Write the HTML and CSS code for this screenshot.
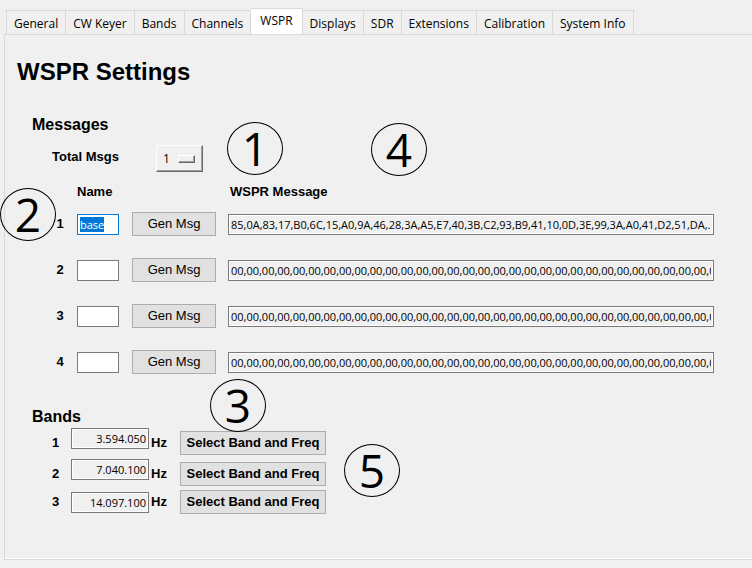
FILE: index.html
```html
<!DOCTYPE html>
<html lang="en">
<head>
<meta charset="utf-8">
<title>WSPR Settings</title>
<link rel="stylesheet" href="styles.css">
</head>
<body>
<nav class="tabs" role="tablist">
  <button class="tab" role="tab">General</button>
  <button class="tab" role="tab">CW Keyer</button>
  <button class="tab" role="tab">Bands</button>
  <button class="tab" role="tab">Channels</button>
  <button class="tab tab-active" role="tab" aria-selected="true">WSPR</button>
  <button class="tab" role="tab">Displays</button>
  <button class="tab" role="tab">SDR</button>
  <button class="tab" role="tab">Extensions</button>
  <button class="tab" role="tab">Calibration</button>
  <button class="tab" role="tab">System Info</button>
</nav>
<main class="panel">
  <h1>WSPR Settings</h1>
  <section class="messages">
    <h2>Messages</h2>
    <div class="total">
      <label for="total">Total Msgs</label>
      <span class="option"><select id="total"><option>1</option><option>2</option><option>3</option><option>4</option></select></span>
    </div>
    <div class="message-row heads">
      <span></span><span id="name-head">Name</span><span></span><span id="message-head">WSPR Message</span>
    </div>
    <div class="message-row">
      <label for="name1">1</label>
      <input class="field name" id="name1" value="base">
      <button class="button">Gen Msg</button>
      <input class="field" aria-labelledby="message-head" readonly value="85,0A,83,17,B0,6C,15,A0,9A,46,28,3A,A5,E7,40,3B,C2,93,B9,41,10,0D,3E,99,3A,A0,41,D2,51,DA,.">
    </div>
    <div class="message-row">
      <label for="name2">2</label>
      <input class="field name" id="name2">
      <button class="button">Gen Msg</button>
      <input class="field" aria-labelledby="message-head" readonly value="00,00,00,00,00,00,00,00,00,00,00,00,00,00,00,00,00,00,00,00,00,00,00,00,00,00,00,00,00,00,00,00,">
    </div>
    <div class="message-row">
      <label for="name3">3</label>
      <input class="field name" id="name3">
      <button class="button">Gen Msg</button>
      <input class="field" aria-labelledby="message-head" readonly value="00,00,00,00,00,00,00,00,00,00,00,00,00,00,00,00,00,00,00,00,00,00,00,00,00,00,00,00,00,00,00,00,">
    </div>
    <div class="message-row">
      <label for="name4">4</label>
      <input class="field name" id="name4">
      <button class="button">Gen Msg</button>
      <input class="field" aria-labelledby="message-head" readonly value="00,00,00,00,00,00,00,00,00,00,00,00,00,00,00,00,00,00,00,00,00,00,00,00,00,00,00,00,00,00,00,00,">
    </div>
  </section>
  <section class="bands">
    <h2>Bands</h2>
    <div class="band-row tall">
      <label for="band1">1</label>
      <input class="field freq" id="band1" readonly value="3.594.050">
      <span>Hz</span>
      <button class="button strong">Select Band and Freq</button>
    </div>
    <div class="band-row tall">
      <label for="band2">2</label>
      <input class="field freq" id="band2" readonly value="7.040.100">
      <span>Hz</span>
      <button class="button strong">Select Band and Freq</button>
    </div>
    <div class="band-row">
      <label for="band3">3</label>
      <input class="field freq" id="band3" readonly value="14.097.100">
      <span>Hz</span>
      <button class="button strong">Select Band and Freq</button>
    </div>
  </section>
</main>
<span class="callout callout-1">1</span>
<span class="callout callout-2">2</span>
<span class="callout callout-3">3</span>
<span class="callout callout-4">4</span>
<span class="callout callout-5">5</span>
<script src="script.js"></script>
</body>
</html>
```
FILE: styles.css
```css
* { box-sizing: border-box; }

body {
  margin: 0;
  min-height: 100vh;
  padding: 8px 0 8px 4px;
  display: flex;
  flex-direction: column;
  position: relative;
  overflow-x: hidden;
  background: #f0f0f0;
  color: #000;
  font: bold 13px/16px "Liberation Sans", Arial, sans-serif;
}

h1, h2 { margin: 0; }
h1 { font-size: 24px; line-height: 28px; padding: 23px 0 0 12px; }
h2 { font-size: 16px; line-height: 20px; padding-left: 27px; }

.tabs {
  display: flex;
  align-items: flex-end;
  padding-left: 2px;
}

.tab {
  height: 24px;
  margin: 0;
  padding: 2px 7px 0;
  border: 1px solid #d9d9d9;
  border-width: 1px 1px 0 0;
  background: #f0f0f0;
  color: #000;
  font: 12px/16px "Open Sans", "Noto Sans", sans-serif;
  white-space: nowrap;
}
.tab:first-child { border-left-width: 1px; }

.tab-active {
  height: 27px;
  margin-bottom: -1px;
  padding: 0 9px 2px;
  background: #fff;
}

.panel {
  flex: 1;
  border: 1px solid #d9d9d9;
  border-right: 0;
  box-shadow: inset 0 -1px #fff;
}

.messages { padding-top: 29px; }

.total {
  display: flex;
  align-items: center;
  padding: 10px 0 0 47px;
}
.total label { width: 104px; padding-bottom: 4px; }

.option { position: relative; }
.option::after {
  content: "";
  position: absolute;
  right: 8px;
  top: 10px;
  width: 15px;
  height: 6px;
  border: 1px solid;
  border-color: #fff #696969 #696969 #fff;
  box-shadow: inset -1px -1px #a0a0a0;
  pointer-events: none;
}
.option select {
  display: block;
  appearance: none;
  width: 47px;
  height: 27px;
  padding: 0 6px;
  border: 1px solid;
  border-color: #fff #696969 #696969 #fff;
  border-radius: 0;
  box-shadow: inset -1px -1px #a0a0a0;
  background: #f0f0f0;
  color: #000;
  font: 12px/16px "Open Sans", "Noto Sans", sans-serif;
}

.message-row {
  display: grid;
  grid-template-columns: 10px 43px 84px 1fr;
  column-gap: 12px;
  align-items: center;
  min-height: 24px;
  margin: 0 38px 22px 50px;
}
.message-row label { text-align: center; }
.heads { margin-top: 12px; margin-bottom: 12px; min-height: 16px; }
#message-head { padding-left: 2px; }

.field {
  width: 100%;
  min-width: 0;
  height: 21px;
  padding: 0 2px;
  border: 1px solid #7a7a7a;
  border-radius: 0;
  outline: 0;
  background: #f0f0f0;
  box-shadow: inset 0 0 0 1px #fff;
  color: #000;
  font: 11px/15px "Open Sans", "Noto Sans", sans-serif;
}
.name { width: 42px; background: #fff; }
.name:focus { border-color: #0078d7; }
.field::selection { background: #0078d7; color: #fff; }

.button {
  height: 24px;
  padding: 0 4px;
  border: 1px solid #adadad;
  border-radius: 0;
  background: #e1e1e1;
  color: #000;
  font: 13px/16px "Liberation Sans", Arial, sans-serif;
  white-space: nowrap;
}
.strong { font-weight: bold; }

.bands { padding-top: 11px; }
.bands h2 { padding-bottom: 1px; }

.band-row {
  display: grid;
  grid-template-columns: 19px 78px 31px 146px;
  justify-content: start;
  align-items: center;
  margin-left: 47px;
}
.band-row .freq { text-align: right; }
.band-row span { padding-left: 2px; }
.tall { min-height: 27px; align-items: end; margin-bottom: 4px; }
.tall .freq { align-self: start; }
.tall label, .tall span { padding-bottom: 4px; }

.callout {
  position: absolute;
  width: 56px;
  height: 53px;
  border: 1px solid #000;
  border-radius: 50%;
  font: 46px/51px "Open Sans", "Noto Sans", sans-serif;
  text-align: center;
  pointer-events: none;
}
.callout-1 { left: 227px; top: 122px; }
.callout-2 { left: 0; top: 188px; }
.callout-3 { left: 210px; top: 379px; }
.callout-4 { left: 371px; top: 123px; }
.callout-5 { left: 344px; top: 444px; }
```
FILE: script.js
```js
const firstName = document.getElementById("name1");
firstName.focus();
firstName.select();
```
